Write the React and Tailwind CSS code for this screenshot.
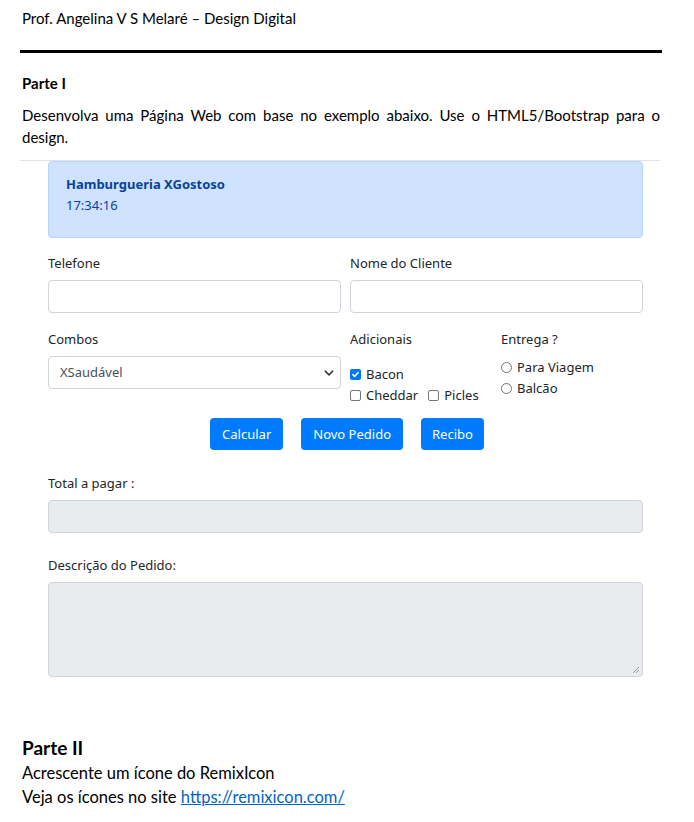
export default function App() {
  const doc = { fontFamily: 'Lato, "Open Sans", sans-serif' };
  const ui = { fontFamily: '"Noto Sans", "Open Sans", sans-serif' };

  return (
    <div className="w-[694px] h-[822px] bg-white text-black overflow-hidden" style={doc}>
      <div className="px-[22px] pt-[8px] text-[15px] leading-[20px]">Prof. Angelina V S Melaré – Design Digital</div>
      <div className="mx-[20px] mt-[22px] h-[3px] bg-black w-[642px]" />

      <div className="px-[22px] mt-[19px] text-[15px] leading-[22px] font-bold">Parte I</div>
      <p className="pl-[22px] pr-[34px] mt-[10px] text-[15px] leading-[22px] text-justify">
        Desenvolva uma Página Web com base no exemplo abaixo. Use o HTML5/Bootstrap para o design.
      </p>

      {/* print da página bootstrap */}
      <div className="ml-[20px] mt-[12px] w-[640px] border-t border-[#e3e3e3] pl-[28px] pr-[17px] text-[13px] text-[#212529]" style={ui}>
        <div className="bg-[#cfe2ff] border border-[#b6d4fe] rounded-[4px] h-[77px] px-[17px] pt-[12px] text-[#084298]">
          <div className="font-bold leading-[20px]">Hamburgueria XGostoso</div>
          <div className="leading-[20px] mt-[1px]">17:34:16</div>
        </div>

        <div className="grid grid-cols-2 gap-x-[9px] mt-[16px]">
          <div>
            <div className="leading-[18px]">Telefone</div>
            <div className="mt-[8px] h-[33px] border border-[#ced4da] rounded-[4px] bg-white" />
          </div>
          <div>
            <div className="leading-[18px]">Nome do Cliente</div>
            <div className="mt-[8px] h-[33px] border border-[#ced4da] rounded-[4px] bg-white" />
          </div>
        </div>

        <div className="grid grid-cols-[293px_142px_1fr] gap-x-[9px] mt-[17px]">
          <div>
            <div className="leading-[18px]">Combos</div>
            <div className="mt-[8px] h-[33px] border border-[#ced4da] rounded-[4px] bg-white flex items-center justify-between pl-[11px] pr-[6px] text-[#495057]">
              <span>XSaudável</span>
              <svg width="10" height="10" viewBox="0 0 16 16" fill="none" stroke="#343a40" strokeWidth="2.4" strokeLinecap="round" strokeLinejoin="round">
                <path d="M2 5l6 6 6-6" />
              </svg>
            </div>
          </div>
          <div>
            <div className="leading-[18px]">Adicionais</div>
            <div className="mt-[16px] flex items-center gap-[5px] leading-[20px]">
              <span className="w-[11px] h-[11px] rounded-[2px] bg-[#0075ff] flex items-center justify-center">
                <svg width="9" height="9" viewBox="0 0 12 12" fill="none" stroke="white" strokeWidth="2" strokeLinecap="round" strokeLinejoin="round">
                  <path d="M2.5 6.2l2.3 2.3 4.7-5" />
                </svg>
              </span>
              <span>Bacon</span>
            </div>
            <div className="mt-[1px] flex items-center leading-[20px]">
              <span className="w-[11px] h-[11px] rounded-[2px] border border-[#767676] bg-white" />
              <span className="ml-[5px]">Cheddar</span>
              <span className="ml-[10px] w-[11px] h-[11px] rounded-[2px] border border-[#767676] bg-white" />
              <span className="ml-[5px]">Picles</span>
            </div>
          </div>
          <div>
            <div className="leading-[18px]">Entrega ?</div>
            <div className="mt-[9px] flex items-center gap-[5px] leading-[20px]">
              <span className="w-[11px] h-[11px] rounded-full border border-[#767676] bg-white" />
              <span>Para Viagem</span>
            </div>
            <div className="mt-[1px] flex items-center gap-[5px] leading-[20px]">
              <span className="w-[11px] h-[11px] rounded-full border border-[#767676] bg-white" />
              <span>Balcão</span>
            </div>
          </div>
        </div>

        <div className="flex justify-center gap-[18px] mt-[13px] pl-[3px]">
          <button className="h-[32px] px-[12px] rounded-[4px] bg-[#007bff] text-white leading-[20px]">Calcular</button>
          <button className="h-[32px] px-[12px] rounded-[4px] bg-[#007bff] text-white leading-[20px]">Novo Pedido</button>
          <button className="h-[32px] px-[11px] rounded-[4px] bg-[#007bff] text-white leading-[20px]">Recibo</button>
        </div>

        <div className="mt-[24px] leading-[18px]">Total a pagar :</div>
        <div className="mt-[8px] h-[33px] border border-[#ced4da] rounded-[4px] bg-[#e9ecef]" />

        <div className="mt-[23px] leading-[18px]">Descrição do Pedido:</div>
        <div className="mt-[8px] h-[95px] border border-[#ced4da] rounded-[4px] bg-[#e9ecef] flex items-end justify-end p-[2px]">
          <svg width="8" height="8" viewBox="0 0 8 8" stroke="#9a9a9a" strokeWidth="1">
            <path d="M7 1L1 7M7 4L4 7" />
          </svg>
        </div>
      </div>

      <div className="px-[22px] mt-[58px] text-[19px] leading-[26px] font-bold">Parte II</div>
      <div className="px-[22px] text-[16.5px] leading-[24px]">Acrescente um ícone do RemixIcon</div>
      <div className="px-[22px] text-[16.5px] leading-[24px]">
        Veja os ícones no site{' '}
        <a href="#" className="text-[#0563c1] underline">https://remixicon.com/</a>
      </div>
    </div>
  );
}
